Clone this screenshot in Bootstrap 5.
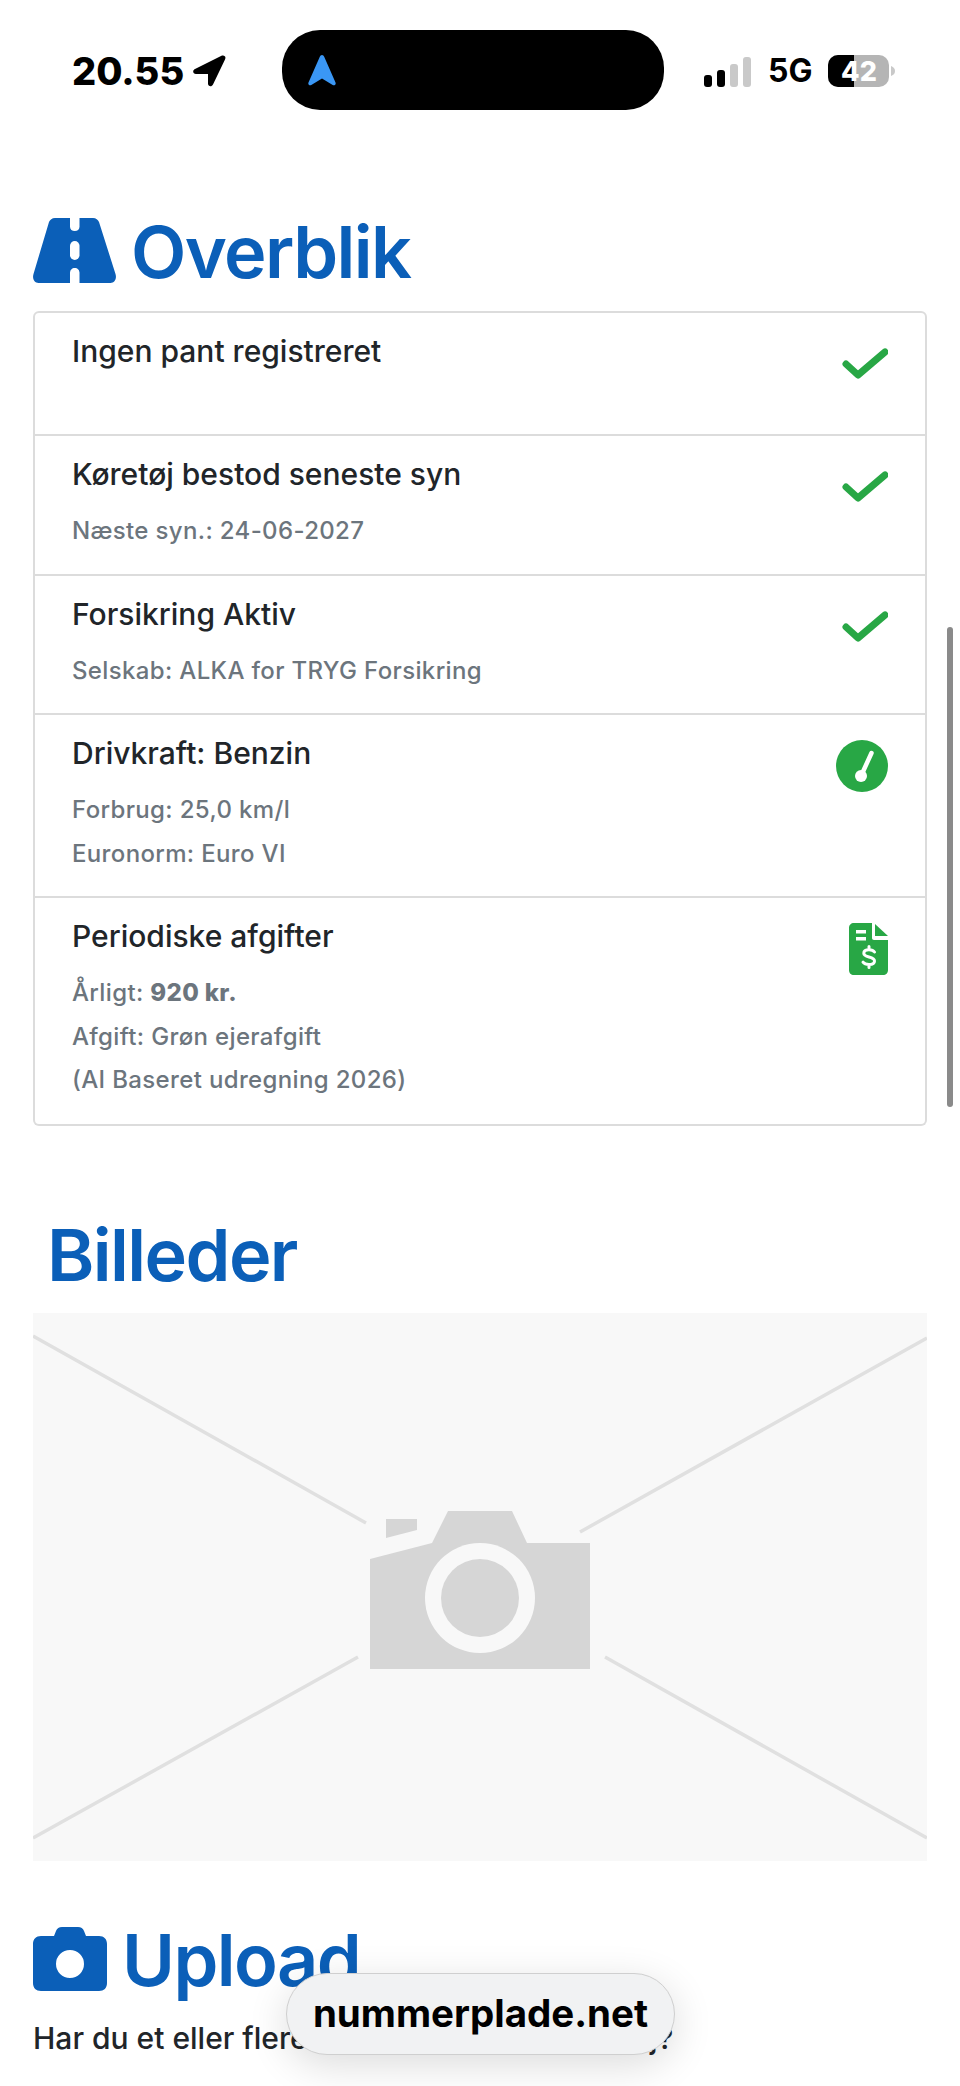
<!DOCTYPE html>
<html lang="da">
<head>
  <meta charset="UTF-8" />
  <title>Overblik</title>
  <meta name="viewport" content="width=device-width, initial-scale=1" />
  <link href="https://cdn.jsdelivr.net/npm/bootstrap@5.3.0/dist/css/bootstrap.min.css" rel="stylesheet" />
  <style>
    body {
      background-color: #fff;
      font-family: Inter, "Liberation Sans", sans-serif;
      color: #212529;
      height: 2086px;
      overflow: hidden;
    }
    .page-wrap {
      position: relative;
      height: 2086px;
      overflow: hidden;
      padding: 0 33px;
    }
    .status-bar {
      height: 110px;
      padding-top: 30px;
      margin: 0 -33px;
      padding-left: 72px;
    }
    .status-time {
      font-size: 38px;
      font-weight: 800;
      color: #000;
      line-height: 80px;
      width: 210px;
      gap: 9px;
      padding-top: 2px;
    }
    .dyn-island {
      width: 382px;
      height: 80px;
      background: #000;
      border-radius: 38px;
      padding-left: 26px;
    }
    .status-right {
      margin-left: 40px;
      gap: 16px;
      height: 80px;
      padding-top: 2px;
    }
    .five-g {
      font-size: 32px;
      font-weight: 700;
      color: #000;
    }
    .section-head {
      color: #0b5fb8;
      font-size: 72px;
      font-weight: 600;
      line-height: 1;
      letter-spacing: -1.6px;
    }
    .head-first {
      margin-top: 108px;
      margin-bottom: 28px;
      gap: 15px;
      height: 65px;
    }
    .head-first span {
      padding-top: 3px;
    }
    .head-photos {
      margin-top: 93px;
      margin-bottom: 22px;
      padding-left: 14px;
    }
    .head-upload {
      margin-top: 66px;
      gap: 15px;
      height: 64px;
    }
    .head-upload span {
      padding-top: 3px;
    }
    .info-list {
      border-radius: 6px;
    }
    .info-list .list-group-item {
      border-color: #dcdcdc;
      border-width: 2px;
      padding: 20px 37px 21px 37px;
    }
    .info-list .list-group-item + .list-group-item {
      border-top-width: 0;
    }
    .info-list .list-group-item:last-child {
      padding-bottom: 22px;
    }
    .row-title {
      font-size: 30px;
      font-weight: 500;
      line-height: 36px;
      margin-bottom: 17px;
    }
    .row-sub {
      font-size: 24px;
      line-height: 43.5px;
      color: #6c757d;
      font-weight: 500;
      letter-spacing: .35px;
    }
    .row-sub b {
      font-weight: 800;
    }
    .row-one {
      height: 125px;
    }
    .ok-icon {
      margin-top: 15px;
    }
    .data-icon {
      margin-top: 5px;
    }
    .photo-box {
      display: block;
      width: 894px;
      height: 548px;
    }
    .upload-text {
      font-size: 30px;
      font-weight: 500;
      line-height: 36px;
      margin-top: 29px;
      white-space: nowrap;
    }
    .page-scroll {
      position: absolute;
      left: 947px;
      top: 627px;
      width: 6px;
      height: 480px;
      border-radius: 3px;
      background: #8a8a8a;
    }
    .url-pill {
      position: absolute;
      left: 286px;
      top: 1973px;
      width: 389px;
      height: 82px;
      border-radius: 41px;
      background: #f1f2f3;
      border: 1px solid #cfcfcf;
      box-shadow: 0 10px 40px rgba(0, 0, 0, .14);
      font-size: 38.500px;
      font-weight: 700;
      color: #000;
    }
  </style>
</head>
<body>
<div class="page-wrap">

  <!-- Status bar -->
  <div class="status-bar d-flex">
    <div class="status-time d-flex align-items-center">
      <span>20.55</span>
      <svg width="33" height="32" viewBox="0 0 33 32"><path d="M28 1C31-.5 33.500 1.500 32 4.500L20 29.500C18.500 32.500 15 31.500 15 28.500V19H3C0 19-1 15.500 2 14z" fill="#000"/></svg>
    </div>
    <div class="dyn-island d-flex align-items-center">
      <svg width="28" height="31" viewBox="0 0 28 31"><path d="M14 0c1 0 1.800.8 2.300 2L27.500 27.500c.8 2-1 3.500-2.800 2.500L14 23.500 3.300 30C1.500 31-.3 29.500.5 27.500L11.700 2C12.200.8 13 0 14 0z" fill="#3a97f5"/></svg>
    </div>
    <div class="status-right d-flex align-items-center">
      <svg width="48" height="31" viewBox="0 0 48 31">
        <rect x="0" y="19" width="8" height="12" rx="3" fill="#000"/>
        <rect x="13" y="14" width="8" height="17" rx="3" fill="#000"/>
        <rect x="26" y="8" width="8" height="23" rx="3" fill="#c9c9c9"/>
        <rect x="39" y="1" width="8" height="30" rx="3" fill="#c9c9c9"/>
      </svg>
      <span class="five-g">5G</span>
      <svg width="68" height="32" viewBox="0 0 68 32">
        <rect x="0" y="0" width="61" height="32" rx="10" fill="#b5b5b5"/>
        <path d="M10 0h16v32H10A10 10 0 0 1 0 22V10A10 10 0 0 1 10 0z" fill="#000"/>
        <path d="M63 11c3 1 4 3 4 5s-1 4-4 5z" fill="#c9c9c9"/>
        <text x="31" y="25.500" text-anchor="middle" font-family="Inter, sans-serif" font-size="27" font-weight="800" fill="#fff">42</text>
      </svg>
    </div>
  </div>

  <!-- Overblik -->
  <div class="section-head head-first d-flex align-items-center">
    <svg width="83" height="65" viewBox="0 0 83 65">
      <path d="M22 0H60c3 0 5 2 6 4L82.500 56c1.500 5-1 9-5 9H5.500c-4 0-6.500-4-5-9L16 4c1-2 3-4 6-4z" fill="#0b5fb8"/>
      <path d="M37 0h9.500v8.500c0 3-2 4.500-4.750 4.500S37 11.500 37 8.500z" fill="#fff"/>
      <rect x="37" y="23" width="9.500" height="19" rx="4.750" fill="#fff"/>
      <path d="M37 65V55c0-3 2-5 4.750-5s4.750 2 4.750 5v10z" fill="#fff"/>
    </svg>
    <span>Overblik</span>
  </div>

  <ul class="list-group info-list">
    <li class="list-group-item d-flex justify-content-between row-one">
      <div class="row-title">Ingen pant registreret</div>
      <svg width="46" height="32" viewBox="0 0 46 32" class="flex-shrink-0 ok-icon"><path d="M4 16 16 27 43 4" fill="none" stroke="#28a745" stroke-width="7" stroke-linecap="round" stroke-linejoin="round"/></svg>
    </li>
    <li class="list-group-item d-flex justify-content-between">
      <div>
        <div class="row-title">Køretøj bestod seneste syn</div>
        <div class="row-sub">Næste syn.: 24-06-2027</div>
      </div>
      <svg width="46" height="32" viewBox="0 0 46 32" class="flex-shrink-0 ok-icon"><path d="M4 16 16 27 43 4" fill="none" stroke="#28a745" stroke-width="7" stroke-linecap="round" stroke-linejoin="round"/></svg>
    </li>
    <li class="list-group-item d-flex justify-content-between">
      <div>
        <div class="row-title">Forsikring Aktiv</div>
        <div class="row-sub">Selskab: ALKA for TRYG Forsikring</div>
      </div>
      <svg width="46" height="32" viewBox="0 0 46 32" class="flex-shrink-0 ok-icon"><path d="M4 16 16 27 43 4" fill="none" stroke="#28a745" stroke-width="7" stroke-linecap="round" stroke-linejoin="round"/></svg>
    </li>
    <li class="list-group-item d-flex justify-content-between">
      <div>
        <div class="row-title">Drivkraft: Benzin</div>
        <div class="row-sub">Forbrug: 25,0 km/l</div>
        <div class="row-sub">Euronorm: Euro VI</div>
      </div>
      <svg width="52" height="52" viewBox="0 0 52 52" class="flex-shrink-0 data-icon"><circle cx="26" cy="26" r="26" fill="#28a745"/><path d="M25 36 35.500 13" stroke="#fff" stroke-width="4.500" stroke-linecap="round"/><circle cx="25" cy="36" r="6" fill="#fff"/></svg>
    </li>
    <li class="list-group-item d-flex justify-content-between">
      <div>
        <div class="row-title">Periodiske afgifter</div>
        <div class="row-sub">Årligt: <b>920 kr.</b></div>
        <div class="row-sub">Afgift: Grøn ejerafgift</div>
        <div class="row-sub">(AI Baseret udregning 2026)</div>
      </div>
      <svg width="39" height="52" viewBox="0 0 39 52" class="flex-shrink-0 data-icon">
        <path d="M5 0h18v15c0 1 .8 2 2 2h14v30c0 3-2 5-5 5H5c-3 0-5-2-5-5V5c0-3 2-5 5-5z" fill="#28a745"/>
        <path d="M26 1 39 13H26z" fill="#28a745"/>
        <rect x="7" y="7" width="10" height="3.500" fill="#fff"/>
        <rect x="7" y="14" width="10" height="3.500" fill="#fff"/>
        <path d="M25.500 29c-1-1.500-2.800-2.300-5.500-2.300-3 0-5.200 1.300-5.200 3.500s2.200 3 5.200 3.800 5.500 1.700 5.500 3.900-2.300 3.600-5.500 3.600-5-1-6-2.400M20 23.500v3M20 41.500v3" fill="none" stroke="#fff" stroke-width="3" stroke-linecap="round"/>
      </svg>
    </li>
  </ul>

  <!-- Billeder -->
  <div class="section-head head-photos">Billeder</div>
  <svg class="photo-box" viewBox="0 0 894 548">
    <rect width="894" height="548" fill="#f8f8f8"/>
    <g stroke="#e0e0e0" stroke-width="3.500" fill="none">
      <path d="M0 23 333 210M894 25 547 219M0 525 325 344M894 525 572 344"/>
    </g>
    <path d="M337 246 399 230 415 198H479L494 230H557V356H337z" fill="#d6d6d6"/>
    <path d="M353 206H384V217L353 225z" fill="#d6d6d6"/>
    <circle cx="447" cy="285" r="55" fill="#f8f8f8"/>
    <circle cx="447" cy="285" r="39" fill="#d6d6d6"/>
  </svg>

  <!-- Upload -->
  <div class="section-head head-upload d-flex align-items-center">
    <svg width="74" height="64" viewBox="0 0 74 64"><path d="M8 9h13l2-5c1-2.500 3-4 6-4h16c3 0 5 1.500 6 4l2 5h13c5 0 8 3 8 8v39c0 5-3 8-8 8H8c-5 0-8-3-8-8V17c0-5 3-8 8-8zm29 14a14 14 0 1 0 0 28 14 14 0 0 0 0-28z" fill="#0b5fb8" fill-rule="evenodd"/></svg>
    <span>Upload</span>
  </div>
  <p class="upload-text">Har du et eller flere billeder fra dette køretøj?</p>

  <!-- Overlays -->
  <div class="page-scroll"></div>
  <div class="url-pill d-flex align-items-center justify-content-center">nummerplade.net</div>
</div>
<script src="https://cdn.jsdelivr.net/npm/bootstrap@5.3.0/dist/js/bootstrap.bundle.min.js"></script>
</body>
</html>
